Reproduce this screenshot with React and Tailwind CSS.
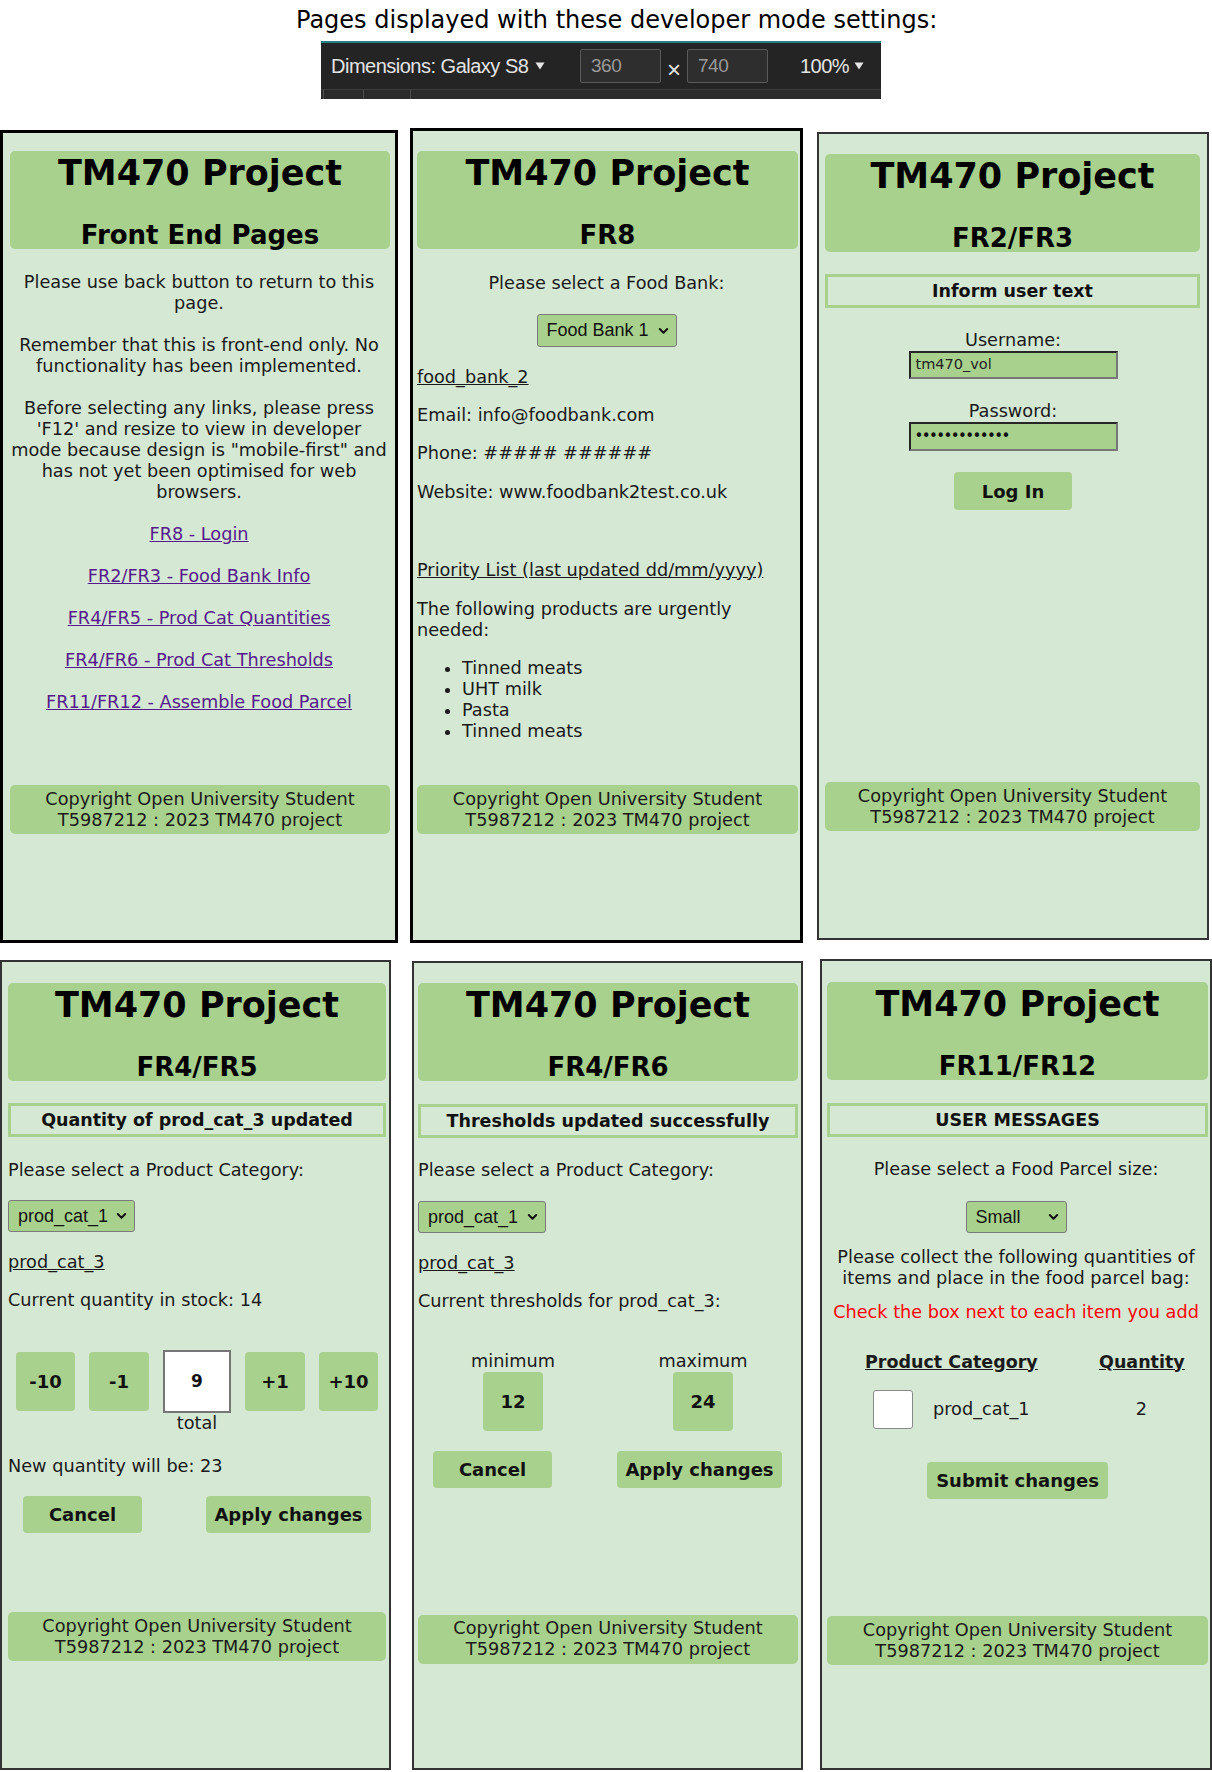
import React from "react";

const Chevron = () => (
  <svg width="11" height="8" viewBox="0 0 11 8" className="shrink-0">
    <path d="M1.8 2 L5.5 5.8 L9.2 2" fill="none" stroke="#111" strokeWidth="2" strokeLinecap="round" strokeLinejoin="round" />
  </svg>
);

const Tri = () => (
  <svg width="10" height="8" viewBox="0 0 10 8" className="shrink-0">
    <path d="M0.5 0.5 L9.5 0.5 L5 7.5 Z" fill="#e6e6e6" />
  </svg>
);

function Header({ sub, className }) {
  return (
    <div className={`bg-[#a9d18e] rounded-[5px] h-[98px] text-center text-black ${className}`}>
      <div className="text-[35px] font-bold leading-[44px]">TM470 Project</div>
      <div className="mt-[26px] text-[26px] font-bold leading-[28px]">{sub}</div>
    </div>
  );
}

function Footer({ className }) {
  return (
    <div className={`bg-[#a9d18e] rounded-[5px] py-[3.5px] text-center text-[17.7px] leading-[21px] text-[#1a1a1a] ${className}`}>
      Copyright Open University Student
      <br />
      T5987212 : 2023 TM470 project
    </div>
  );
}

function Msg({ children, className }) {
  return (
    <div className={`h-[34px] border-[3px] border-[#a9d18e] flex items-center justify-center text-[17.5px] font-bold text-[#111] ${className}`}>
      {children}
    </div>
  );
}

function Select({ label, className }) {
  return (
    <div className={`flex items-center justify-between bg-[#a9d18e] border border-[#7a7a7a] rounded-[3px] pl-[9px] pr-[7px] font-['Liberation_Sans',Arial,sans-serif] text-[18px] text-[#111] ${className}`}>
      <span>{label}</span>
      <Chevron />
    </div>
  );
}

function Btn({ children, className }) {
  return (
    <div className={`flex items-center justify-center bg-[#a9d18e] rounded-[4px] font-bold text-[18px] text-[#111] ${className}`}>
      {children}
    </div>
  );
}

function Panel1() {
  const links = [
    "FR8 - Login",
    "FR2/FR3 - Food Bank Info",
    "FR4/FR5 - Prod Cat Quantities",
    "FR4/FR6 - Prod Cat Thresholds",
    "FR11/FR12 - Assemble Food Parcel",
  ];
  return (
    <div className="mt-[2px] w-[398px] h-[813px] border-[3px] border-black bg-[#d5e8d4] flex flex-col shrink-0">
      <Header className="mt-[18px] ml-[7px] mr-[5px]" sub="Front End Pages" />
      <div className="text-center text-[17.7px] leading-[21px] text-[#1a1a1a] whitespace-nowrap">
        <p className="mt-[23px]">
          Please use back button to return to this
          <br />
          page.
        </p>
        <p className="mt-[21px]">
          Remember that this is front-end only. No
          <br />
          functionality has been implemented.
        </p>
        <p className="mt-[21px]">
          Before selecting any links, please press
          <br />
          'F12' and resize to view in developer
          <br />
          mode because design is "mobile-first" and
          <br />
          has not yet been optimised for web
          <br />
          browsers.
        </p>
        {links.map((l) => (
          <p key={l} className="mt-[21px]">
            <a className="text-[#551a8b] underline">{l}</a>
          </p>
        ))}
      </div>
      <Footer className="mt-[72px] ml-[7px] mr-[5px]" />
    </div>
  );
}

function Panel2() {
  return (
    <div className="ml-[12px] w-[393px] h-[815px] border-[3px] border-black bg-[#d5e8d4] flex flex-col shrink-0 text-[17.7px] leading-[21px] text-[#1a1a1a]">
      <Header className="mt-[20px] ml-[4px] mr-[2px]" sub="FR8" />
      <p className="mt-[23.5px] text-center">Please select a Food Bank:</p>
      <div className="mt-[20.5px] flex justify-center">
        <Select label="Food Bank 1" className="w-[140px] h-[33px]" />
      </div>
      <div className="pl-[4px] whitespace-nowrap">
        <p className="mt-[19.5px] underline">food_bank_2</p>
        <p className="mt-[17px]">Email: info@foodbank.com</p>
        <p className="mt-[17px]">Phone: ##### ######</p>
        <p className="mt-[18px]">Website: www.foodbank2test.co.uk</p>
        <p className="mt-[57px] underline">Priority List (last updated dd/mm/yyyy)</p>
        <p className="mt-[18px]">
          The following products are urgently
          <br />
          needed:
        </p>
        <ul className="mt-[17px] list-disc pl-[45px]">
          <li>Tinned meats</li>
          <li>UHT milk</li>
          <li>Pasta</li>
          <li>Tinned meats</li>
        </ul>
      </div>
      <Footer className="mt-[43.5px] ml-[4px] mr-[2px]" />
    </div>
  );
}

function Panel3() {
  return (
    <div className="ml-[14px] mt-[4px] w-[392px] h-[808px] border-2 border-[#333] bg-[#d5e8d4] flex flex-col shrink-0 text-[17.7px] leading-[21px] text-[#1a1a1a]">
      <Header className="mt-[20px] ml-[6px] mr-[7px]" sub="FR2/FR3" />
      <Msg className="mt-[22px] ml-[6px] mr-[7px]">Inform user text</Msg>
      <p className="mt-[21.5px] text-center">Username:</p>
      <div className="flex justify-center">
        <div className="w-[209px] h-[28px] bg-[#a9d18e] border-2 border-t-[#262626] border-l-[#262626] border-r-[#777] border-b-[#777] flex items-center pl-[5px] text-[14.5px] text-[#222]">
          tm470_vol
        </div>
      </div>
      <p className="mt-[22.5px] text-center">Password:</p>
      <div className="flex justify-center">
        <div className="w-[209px] h-[29px] bg-[#a9d18e] border-2 border-t-[#262626] border-l-[#262626] border-r-[#777] border-b-[#777] flex items-center pl-[4px] text-[15px] tracking-[-1.6px] text-[#111]">
          •••••••••••••
        </div>
      </div>
      <div className="mt-[21px] flex justify-center">
        <Btn className="w-[118px] h-[38px]">Log In</Btn>
      </div>
      <Footer className="mt-[272px] ml-[6px] mr-[7px]" />
    </div>
  );
}

function Panel4() {
  return (
    <div className="mt-[1px] w-[391px] h-[810px] border-2 border-[#333] bg-[#d5e8d4] flex flex-col shrink-0 text-[17.7px] leading-[21px] text-[#1a1a1a]">
      <Header className="mt-[21px] ml-[6px] mr-[3px]" sub="FR4/FR5" />
      <Msg className="mt-[22px] ml-[6px] mr-[3px]">Quantity of prod_cat_3 updated</Msg>
      <div className="pl-[6px] whitespace-nowrap">
        <p className="mt-[22.5px]">Please select a Product Category:</p>
        <div className="mt-[19.5px] flex">
          <Select label="prod_cat_1" className="w-[127px] h-[32px]" />
        </div>
        <p className="mt-[19.5px] underline">prod_cat_3</p>
        <p className="mt-[17px]">Current quantity in stock: 14</p>
        <div className="mt-[39.5px] flex items-start pl-[8px] gap-[14px]">
          <Btn className="mt-[2px] w-[59px] h-[59px] text-[17px]">-10</Btn>
          <Btn className="mt-[2px] w-[60px] h-[59px] text-[17px]">-1</Btn>
          <div className="flex flex-col items-center w-[68px]">
            <div className="w-[68px] h-[63px] bg-white border-2 border-[#767676] flex items-center justify-center font-bold text-[17px] text-[#111]">
              9
            </div>
            <div className="leading-[21px]">total</div>
          </div>
          <Btn className="mt-[2px] w-[60px] h-[59px] text-[17px]">+1</Btn>
          <Btn className="mt-[2px] w-[59px] h-[59px] text-[17px]">+10</Btn>
        </div>
        <p className="mt-[21.5px]">New quantity will be: 23</p>
        <div className="mt-[19.5px] flex pl-[15px] gap-[64px]">
          <Btn className="w-[119px] h-[37px]">Cancel</Btn>
          <Btn className="w-[165px] h-[37px]">Apply changes</Btn>
        </div>
      </div>
      <Footer className="mt-[79px] ml-[6px] mr-[3px]" />
    </div>
  );
}

function Panel5() {
  return (
    <div className="ml-[21px] mt-[2px] w-[391px] h-[809px] border-2 border-[#333] bg-[#d5e8d4] flex flex-col shrink-0 text-[17.7px] leading-[21px] text-[#1a1a1a]">
      <Header className="mt-[20px] ml-[4px] mr-[3px]" sub="FR4/FR6" />
      <Msg className="mt-[23px] ml-[4px] mr-[3px]">Thresholds updated successfully</Msg>
      <div className="pl-[4px] pr-[3px] whitespace-nowrap">
        <p className="mt-[21.5px]">Please select a Product Category:</p>
        <div className="mt-[20.5px] flex">
          <Select label="prod_cat_1" className="w-[128px] h-[32px]" />
        </div>
        <p className="mt-[19.5px] underline">prod_cat_3</p>
        <p className="mt-[17px]">Current thresholds for prod_cat_3:</p>
        <div className="mt-[39px] grid grid-cols-2">
          <div className="flex flex-col items-center">
            <div>minimum</div>
            <Btn className="w-[60px] h-[59px]">12</Btn>
          </div>
          <div className="flex flex-col items-center">
            <div>maximum</div>
            <Btn className="w-[60px] h-[59px]">24</Btn>
          </div>
        </div>
        <div className="mt-[20px] flex pl-[15px] gap-[65px]">
          <Btn className="w-[119px] h-[37px]">Cancel</Btn>
          <Btn className="w-[165px] h-[37px]">Apply changes</Btn>
        </div>
      </div>
      <Footer className="mt-[127px] ml-[4px] mr-[3px]" />
    </div>
  );
}

function Panel6() {
  return (
    <div className="ml-[17px] w-[392px] h-[811px] border-2 border-[#333] bg-[#d5e8d4] flex flex-col shrink-0 text-[17.7px] leading-[21px] text-[#1a1a1a]">
      <Header className="mt-[21px] ml-[5px] mr-[2px]" sub="FR11/FR12" />
      <Msg className="mt-[23px] ml-[5px] mr-[2px]">USER MESSAGES</Msg>
      <p className="mt-[22px] text-center">Please select a Food Parcel size:</p>
      <div className="mt-[21px] flex justify-center">
        <Select label="Small" className="w-[101px] h-[32px]" />
      </div>
      <p className="mt-[13.5px] text-center whitespace-nowrap">
        Please collect the following quantities of
        <br />
        items and place in the food parcel bag:
      </p>
      <p className="mt-[13px] text-center text-[#ff0000] whitespace-nowrap">Check the box next to each item you add</p>
      <div className="mt-[29px] flex font-bold text-[17.5px] whitespace-nowrap">
        <div className="ml-[43px] w-[234px]">
          <span className="underline">Product Category</span>
        </div>
        <div className="w-[85px] text-center">
          <span className="underline">Quantity</span>
        </div>
      </div>
      <div className="mt-[17.5px] flex items-center whitespace-nowrap">
        <div className="ml-[51px] w-[40px] h-[39px] bg-white border border-[#8a8a8a] rounded-[3px]"></div>
        <div className="ml-[20px] w-[166px]">prod_cat_1</div>
        <div className="w-[85px] text-center">2</div>
      </div>
      <div className="mt-[33px] flex justify-center">
        <Btn className="w-[181px] h-[37px] ml-[3px]">Submit changes</Btn>
      </div>
      <Footer className="mt-[117px] ml-[5px] mr-[2px]" />
    </div>
  );
}

function DevBar() {
  return (
    <div className="mt-[7px] ml-[321px] w-[560px] h-[58px] bg-[#242424] flex flex-col font-['Liberation_Sans',Arial,sans-serif]">
      <div className="h-[2px] bg-[#2a8088]"></div>
      <div className="h-[46px] flex items-center pl-[10px]">
        <div className="w-[249px] flex items-center gap-[7px] text-[20px] tracking-[-0.5px] text-[#e4e4e4] whitespace-nowrap">
          <span>Dimensions: Galaxy S8</span>
          <Tri />
        </div>
        <div className="w-[81px] h-[34px] border border-[#5a5a5a] rounded-[2px] bg-[#2e2e2e] flex items-center pl-[10px] text-[19px] tracking-[-0.5px] text-[#9a9a9a]">
          360
        </div>
        <div className="w-[26px] text-center text-[24px] leading-[24px] text-[#e4e4e4] mt-[8px]">×</div>
        <div className="w-[81px] h-[34px] border border-[#5a5a5a] rounded-[2px] bg-[#2e2e2e] flex items-center pl-[10px] text-[19px] tracking-[-0.5px] text-[#9a9a9a]">
          740
        </div>
        <div className="ml-[32px] flex items-center gap-[5px] text-[20px] tracking-[-0.5px] text-[#e4e4e4]">
          <span>100%</span>
          <Tri />
        </div>
      </div>
      <div className="h-[10px] flex border-t border-[#3c3c3c] bg-[#2b2b2b]">
        <div className="w-[3px] border-r border-[#4e4e4e]"></div>
        <div className="w-[40px] border-r border-[#4e4e4e]"></div>
        <div className="w-[47px] border-r border-[#4e4e4e]"></div>
      </div>
    </div>
  );
}

export default function App() {
  return (
    <div className="w-[1212px] h-[1772px] bg-white overflow-hidden font-['DejaVu_Sans',Verdana,sans-serif]">
      <div className="pt-[7px] pl-[296px] text-[24px] leading-[27px] text-black whitespace-nowrap">
        Pages displayed with these developer mode settings:
      </div>
      <DevBar />
      <div className="mt-[29px] flex items-start">
        <Panel1 />
        <Panel2 />
        <Panel3 />
      </div>
      <div className="mt-[16px] flex items-start">
        <Panel4 />
        <Panel5 />
        <Panel6 />
      </div>
    </div>
  );
}
